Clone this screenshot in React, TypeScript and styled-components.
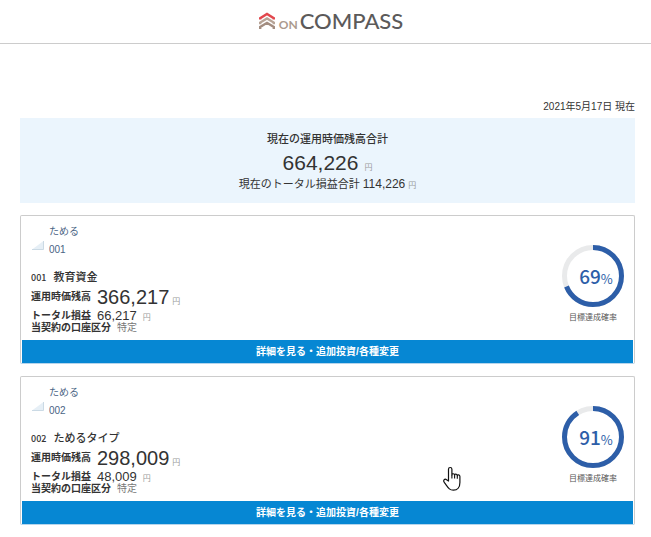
import React from "react";
import styled, { createGlobalStyle } from "styled-components";

const GlobalStyle = createGlobalStyle`
  *, *::before, *::after { box-sizing: border-box; }
  body {
    margin: 0;
    background: #fff;
    color: #333;
    font-family: "Liberation Sans", "Noto Sans CJK JP", sans-serif;
    font-size: 10px;
  }
  h1, h2, p, dl, dt, dd { margin: 0; font-size: inherit; font-weight: inherit; }
`;

const Header = styled.header`
  display: flex;
  justify-content: center;
  align-items: center;
  height: 44px;
  padding-left: 11px;
  border-bottom: 1px solid #ccc;
`;

const Logo = styled.h1`
  display: flex;
  align-items: baseline;
  padding-top: 2px;
  font-family: Lato, sans-serif;
  line-height: 24px;
`;

const LogoMark = styled.svg`
  width: 16px;
  height: 17px;
  margin-right: 4px;
`;

const LogoOn = styled.span`
  margin-right: 2px;
  color: #ab9a8e;
  font-size: 12px;
  font-weight: 700;
`;

const LogoName = styled.span`
  color: #5c5a5a;
  font-size: 22px;
  font-weight: 500;
`;

const Main = styled.main`
  padding: 54px 16px 12px 20px;
`;

const DateLine = styled.p`
  height: 20px;
  line-height: 18px;
  text-align: right;
`;

const Summary = styled.section`
  display: flex;
  flex-direction: column;
  align-items: center;
  margin-bottom: 12px;
  padding: 12px 0 9px;
  background: #ebf5fd;
`;

const SummaryTitle = styled.h2`
  height: 18px;
  font-size: 11px;
  font-weight: 500;
  line-height: 18px;
`;

const SummaryTotal = styled.p`
  height: 28px;
  font-size: 21px;
  line-height: 30px;
`;

const SummaryProfit = styled.p`
  height: 18px;
  font-size: 11px;
  line-height: 16px;
`;

const ProfitValue = styled.span`
  font-size: 12px;
`;

const Yen = styled.span<{ $gap: number }>`
  margin-left: ${(p) => p.$gap}px;
  color: #999;
  font-size: 8px;
  line-height: 1;
`;

const Card = styled.article`
  margin-bottom: 12px;
  padding: 0 1px;
  border: 1px solid #ccc;
  border-bottom-color: #b5d5ec;
  border-radius: 2px;
`;

const CardBody = styled.div`
  display: flex;
  justify-content: space-between;
  padding: 7px 9px 7px 9px;
`;

const Category = styled.div`
  display: flex;
  align-items: center;
  gap: 5px;
  margin-bottom: 9px;
  color: #4a6484;
  line-height: 18px;
`;

const CategoryLine = styled.p`
  height: 18px;
`;

const CategoryIcon = styled.svg`
  width: 13px;
  height: 9px;
  margin-top: 8px;
`;

const PlanTitle = styled.h2`
  display: flex;
  align-items: baseline;
  gap: 7px;
  height: 18px;
  font-family: "Noto Sans CJK JP", sans-serif;
  font-size: 11px;
  font-weight: 500;
  line-height: 16px;
`;

const PlanNumber = styled.span`
  font-size: 9px;
`;

const Figure = styled.div<{ $height: number }>`
  display: flex;
  align-items: center;
  gap: 6px;
  height: ${(p) => p.$height}px;
  line-height: ${(p) => p.$height}px;
`;

const Term = styled.dt`
  font-weight: 700;
`;

const Value = styled.dd<{ $size: number; $muted?: boolean }>`
  color: ${(p) => (p.$muted ? "#777" : "#333")};
  font-size: ${(p) => p.$size}px;
`;

const Goal = styled.div`
  display: flex;
  flex-direction: column;
  align-items: center;
  margin-top: 22px;
`;

const Ring = styled.div`
  display: grid;
  place-items: center;
  width: 62px;
  height: 62px;

  > * { grid-area: 1 / 1; }
`;

const Rate = styled.p`
  padding: 2px 0 0 6px;
  color: #2d5ea8;
  font-family: "Noto Sans CJK JP", sans-serif;
  font-size: 19px;
  font-weight: 500;
  line-height: 24px;
`;

const Percent = styled.span`
  font-size: 13px;
  font-weight: 400;
`;

const GoalLabel = styled.p`
  margin-top: 4px;
  color: #555;
  font-size: 8px;
  line-height: 14px;
`;

const DetailButton = styled.button`
  display: block;
  width: 100%;
  height: 23px;
  padding: 0;
  border: 0;
  background: #0687d3;
  color: #fff;
  font-family: "Liberation Sans", "Noto Sans CJK JP", sans-serif;
  font-size: 10px;
  font-weight: 700;
  line-height: 23px;
  cursor: pointer;
`;

const Pointer = styled.svg`
  position: absolute;
  top: 466px;
  left: 442px;
  width: 20px;
  height: 26px;
  pointer-events: none;
`;

interface Plan {
  id: string;
  name: string;
  balance: string;
  profit: string;
  rate: number;
}

const plans: Plan[] = [
  { id: "001", name: "教育資金", balance: "366,217", profit: "66,217", rate: 69 },
  { id: "002", name: "ためるタイプ", balance: "298,009", profit: "48,009", rate: 91 },
];

function PlanCard({ plan }: { plan: Plan }) {
  return (
    <Card>
      <CardBody>
        <div>
          <Category>
            <CategoryIcon viewBox="0 0 13 9" aria-hidden="true">
              <path d="M1 8.5 12.5 0v8.5z" fill="#e6eff6" />
              <path d="M1 8.5h11.5V0" fill="none" stroke="#cbdae5" />
            </CategoryIcon>
            <div>
              <CategoryLine>ためる</CategoryLine>
              <CategoryLine>{plan.id}</CategoryLine>
            </div>
          </Category>
          <PlanTitle>
            <PlanNumber>{plan.id}</PlanNumber>
            {plan.name}
          </PlanTitle>
          <dl>
            <Figure $height={22}>
              <Term>運用時価残高</Term>
              <Value $size={20}>{plan.balance}<Yen $gap={3}>円</Yen></Value>
            </Figure>
            <Figure $height={15}>
              <Term>トータル損益</Term>
              <Value $size={13}>{plan.profit}<Yen $gap={6}>円</Yen></Value>
            </Figure>
            <Figure $height={10}>
              <Term>当契約の口座区分</Term>
              <Value $size={10} $muted>特定</Value>
            </Figure>
          </dl>
        </div>
        <Goal>
          <Ring>
            <svg width="62" height="62" viewBox="0 0 62 62" aria-hidden="true">
              <circle cx="31" cy="31" r="28.5" fill="none" stroke="#e9eaeb" strokeWidth="5" />
              <circle
                cx="31" cy="31" r="28.5" fill="none" stroke="#2d5ea8" strokeWidth="5"
                pathLength="100" strokeDasharray={`${plan.rate} 100`} transform="rotate(-90 31 31)"
              />
            </svg>
            <Rate>{plan.rate}<Percent>%</Percent></Rate>
          </Ring>
          <GoalLabel>目標達成確率</GoalLabel>
        </Goal>
      </CardBody>
      <DetailButton type="button">詳細を見る・追加投資/各種変更</DetailButton>
    </Card>
  );
}

export default function App() {
  return (
    <>
      <GlobalStyle />
      <Header>
        <Logo>
          <LogoMark viewBox="0 0 16 17" aria-hidden="true">
            <g fill="none" strokeWidth="2.4">
              <path d="M1.2 7.6V6.2L8 1.9l6.8 4.3v1.4" stroke="#e2474d" />
              <path d="M1.2 12.2v-1.6L8 6.4l6.8 4.2v1.6" stroke="#b7a497" />
              <path d="M1.2 17v-2L8 10.8l6.8 4.2v2" stroke="#a38d80" />
            </g>
          </LogoMark>
          <LogoOn>ON</LogoOn>
          <LogoName>COMPASS</LogoName>
        </Logo>
      </Header>
      <Main>
        <DateLine>2021年5月17日 現在</DateLine>
        <Summary>
          <SummaryTitle>現在の運用時価残高合計</SummaryTitle>
          <SummaryTotal>664,226<Yen $gap={6}>円</Yen></SummaryTotal>
          <SummaryProfit>
            現在のトータル損益合計 <ProfitValue>114,226</ProfitValue><Yen $gap={3}>円</Yen>
          </SummaryProfit>
        </Summary>
        {plans.map((plan) => <PlanCard key={plan.id} plan={plan} />)}
      </Main>
      <Pointer viewBox="0 0 20 26" aria-hidden="true">
        <path
          d="M6.5 15V3.2a1.7 1.7 0 0 1 3.4 0V9c0-1.7 2.7-1.7 2.7.2 0-1.6 2.7-1.4 2.7.5 0-1.4 2.6-1.2 2.6.8v6c0 5-2.4 7.7-6.5 7.7-4.4 0-5.4-2.9-9-7.6-2-2.6.5-4.2 2.2-2.8z"
          fill="#fff" stroke="#111" strokeWidth="1.2" strokeLinejoin="round"
        />
        <path d="M9.9 9v3.5M12.6 9.2v3.3M15.3 9.7v3" stroke="#111" strokeWidth="1.1" />
      </Pointer>
    </>
  );
}
